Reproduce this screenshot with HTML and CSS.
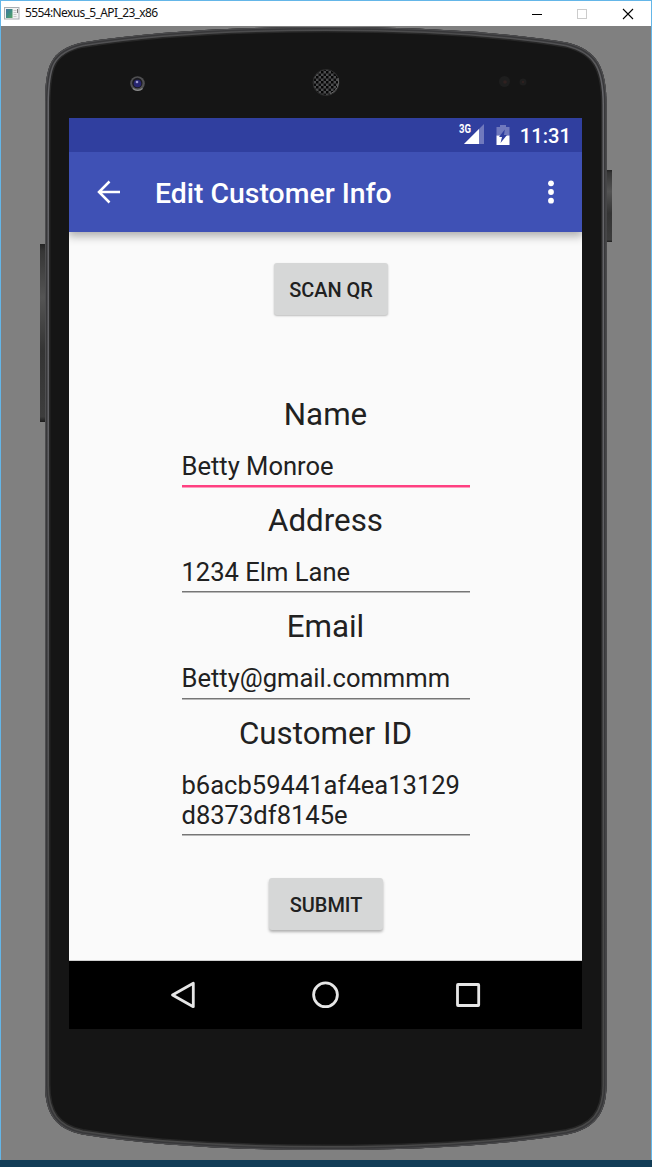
FILE: index.html
```html
<!DOCTYPE html>
<html lang="en">
<head>
<meta charset="utf-8">
<title>5554:Nexus_5_API_23_x86</title>
<link rel="stylesheet" href="styles.css">
</head>
<body>
<div class="window">
  <header class="titlebar">
    <svg class="app-icon" width="16" height="13" viewBox="0 0 16 13">
      <defs><linearGradient id="pic" x1="0" y1="0" x2="1" y2="1"><stop offset="0" stop-color="#4674a4"/><stop offset=".5" stop-color="#3f8e83"/><stop offset="1" stop-color="#5ba465"/></linearGradient></defs>
      <rect x=".5" y=".5" width="14.5" height="11.5" fill="#f3f3f3" stroke="#a9adb1"/>
      <rect x="2" y="2" width="6.5" height="9" fill="url(#pic)"/>
      <path d="M9.5 3.5h3M9.5 5.5h3M9.5 7.5h3M9.5 9.5h3" stroke="#c9c9c9"/>
      <path d="M13.5 2v4" stroke="#777"/>
    </svg>
    <span class="window-title">5554:Nexus_5_API_23_x86</span>
    <svg class="window-controls" width="110" height="24" viewBox="0 0 110 24" fill="none" shape-rendering="crispEdges">
      <path d="M0 12.5h10" stroke="#000"/>
      <rect x="45.5" y="7.5" width="9" height="9" stroke="#ccc"/>
      <path d="M91 7l10 10M101 7L91 17" stroke="#000" stroke-width="1.1" shape-rendering="auto"/>
    </svg>
  </header>
  <main class="stage">
    <svg class="device" width="650" height="1134" viewBox="1 26 650 1134">
      <defs>
        <linearGradient id="rim" x1="0" y1="0" x2="0" y2="1"><stop offset="0" stop-color="#4a4a4b"/><stop offset=".06" stop-color="#67676b"/><stop offset=".45" stop-color="#606064"/><stop offset=".8" stop-color="#4a4a4a"/><stop offset="1" stop-color="#484848"/></linearGradient>
        <linearGradient id="key" x1="0" y1="0" x2="0" y2="1"><stop offset="0" stop-color="#242424"/><stop offset=".04" stop-color="#363636"/><stop offset=".3" stop-color="#545454"/><stop offset=".6" stop-color="#343434"/><stop offset=".97" stop-color="#3d3d3d"/><stop offset="1" stop-color="#1c1c1c"/></linearGradient>
        <pattern id="mesh" x="1" y="1" width="5" height="5" patternUnits="userSpaceOnUse"><rect width="5" height="5" fill="#4c4d4e"/><rect x="0" y="0" width="2.5" height="2.5" fill="#050505"/><rect x="2.5" y="2.5" width="2.5" height="2.5" fill="#0b0b0b"/></pattern>
        <path id="body" d="M45 105C45 66 50 50 82 42.500C155 31 240 27 326 27C412 27 497 31 567 42.500C597 50 606.500 67 606.500 105V1085C606.500 1114 594 1129 567 1134.500C497 1146 412 1150 326 1150C240 1150 155 1146 82 1134.500C56 1129 45 1114 45 1085Z"/>
        <clipPath id="bodyClip"><use href="#body"/></clipPath>
      </defs>
      <rect x="40" y="244" width="6" height="178" fill="url(#key)"/>
      <rect x="606" y="170" width="6" height="72" fill="url(#key)"/>
      <g clip-path="url(#bodyClip)" fill="none">
        <use href="#body" fill="#151515"/>
        <use href="#body" stroke="#272727" stroke-width="11"/>
        <use href="#body" stroke="url(#rim)" stroke-width="8"/>
        <use href="#body" stroke="#38383a" stroke-width="5"/>
        <use href="#body" stroke="#4d4d4f" stroke-width="2"/>
      </g>
      <circle cx="137.500" cy="83.500" r="7.300" fill="#505052"/>
      <path d="M133 88.500a6.700 6.700 0 0 0 9.500 0" stroke="#8b8b8b" fill="none" stroke-width="1.200"/>
      <circle cx="137.300" cy="83" r="5.200" fill="#1b1b20"/>
      <circle cx="137.500" cy="83.500" r="3.800" fill="#282670"/>
      <circle cx="137" cy="82" r="1.300" fill="#9b9bd0"/>
      <circle cx="326" cy="82.500" r="13" fill="url(#mesh)" stroke="#2b2b2b"/>
      <path d="M338 78a13 13 0 0 1-8 16" fill="none" stroke="#666"/>
      <circle cx="504.500" cy="81.500" r="5.500" fill="#1e1e1e"/><circle cx="505" cy="82" r="1.800" fill="#302120"/>
      <circle cx="523" cy="82" r="3.500" fill="#1e1e1e"/><circle cx="523" cy="82" r="1.200" fill="#302120"/>
    </svg>
    <div class="screen">
      <div class="statusbar">
        <svg width="30" height="24" viewBox="0 0 30 24" class="signal">
          <path d="M26 4V24H6Z" fill="#7079bd"/><path d="M21 9V24H6Z" fill="#fff"/>
          <text x="1" y="13" class="network" textLength="12" lengthAdjust="spacingAndGlyphs">3G</text>
        </svg>
        <svg width="14" height="22" viewBox="0 0 14 22" class="battery">
          <path d="M4 1h6v2h3.500v8.500H.5V3H4Z" fill="#7079bd"/><path d="M.5 11.500h13V21H.5Z" fill="#fff"/>
          <path d="M8.800 5.500L3 13h3l-1.500 6L11 11H8Z" fill="#303f9f"/>
        </svg>
        <span class="clock">11:31</span>
      </div>
      <div class="toolbar">
        <svg width="24" height="24" viewBox="0 0 24 24" class="back"><path d="M12.500 1.500L2 12l10.500 10.500M2 12H23" fill="none" stroke="#fff" stroke-width="2.500"/></svg>
        <h1 class="title">Edit Customer Info</h1>
        <svg width="6" height="24" viewBox="0 0 6 24" class="more" fill="#fff"><circle cx="3" cy="3.300" r="2.900"/><circle cx="3" cy="12" r="2.900"/><circle cx="3" cy="20.700" r="2.900"/></svg>
      </div>
      <div class="content">
        <div class="button scan">SCAN QR</div>
        <div class="form">
          <div class="field"><div class="label">Name</div><div class="input focused">Betty Monroe</div></div>
          <div class="field"><div class="label">Address</div><div class="input">1234 Elm Lane</div></div>
          <div class="field"><div class="label">Email</div><div class="input">Betty@gmail.commmm</div></div>
          <div class="field"><div class="label">Customer ID</div><div class="input">b6acb59441af4ea13129<br>d8373df8145e</div></div>
        </div>
        <div class="button submit">SUBMIT</div>
      </div>
      <div class="navbar">
        <svg width="28" height="28" viewBox="0 0 28 28"><path d="M24.300 2.200V25.700L3.500 14Z"/></svg>
        <svg width="28" height="28" viewBox="0 0 28 28"><circle cx="13.500" cy="13.800" r="11.900"/></svg>
        <svg width="28" height="28" viewBox="0 0 28 28"><rect x="3.500" y="3.500" width="21.200" height="21" rx=".5"/></svg>
      </div>
    </div>
  </main>
  <div class="desktop-edge"></div>
</div>
</body>
</html>
```
FILE: styles.css
```css
* { box-sizing: border-box; }
body { margin: 0; font-family: Roboto, sans-serif; }
svg { display: block; flex: none; }
.window { width: 652px; height: 1167px; display: flex; flex-direction: column; overflow: hidden; }
.titlebar { height: 26px; flex: none; background: #fff; border: 1px solid #64b6e8; border-bottom: 0; display: flex; align-items: center; padding-left: 3px; }
.window-title { font: 12px/23px "Noto Sans", "Open Sans", sans-serif; margin: -2px 0 0 5px; letter-spacing: -.62px; color: #111; white-space: nowrap; }
.window-controls { margin-left: auto; margin-right: 9px; }
.stage { height: 1134px; flex: none; position: relative; background: #808080; border: solid #64b6e8; border-width: 0 1px; padding: 92px 0 0 68px; }
.device { position: absolute; left: 0; top: 0; }
.desktop-edge { height: 7px; background: #123d57; }
.screen { position: relative; width: 513px; height: 911px; background: #fafafa; display: flex; flex-direction: column; overflow: hidden; }
.statusbar { position: relative; z-index: 1; height: 34px; flex: none; background: #303f9f; display: flex; justify-content: flex-end; align-items: center; padding-right: 11px; color: #fff; }
.network { font: 700 12.5px Roboto, sans-serif; fill: #fff; }
.signal { margin-top: -7px; }
.battery { margin-left: 8px; }
.clock { font-weight: 500; font-size: 20.2px; margin-left: 10px; line-height: 34px; padding-top: 2px; }
.toolbar { height: 80px; flex: none; background: #3f51b5; display: flex; align-items: center; padding: 0 28px; color: #fff; box-shadow: 0 3px 9px 1px rgba(0,0,0,.32); }
.title { margin: 3px 0 0 34px; font-size: 28.4px; font-weight: 500; line-height: 34px; white-space: nowrap; }
.more { margin-left: auto; }
.content { height: 729px; flex: none; display: flex; flex-direction: column; align-items: center; border-bottom: 1px solid #cfcfcf; }
.button { width: 114px; height: 52px; flex: none; border-radius: 3px; background: #d6d7d7; color: #212121; font-size: 19.95px; font-weight: 500; line-height: 53px; text-align: center; white-space: nowrap; padding: 1px 0 0 1px; }
.scan { margin: 31px 0 0 10px; box-shadow: 0 1px 2px rgba(0,0,0,.25); }
.submit { margin-top: 15px; box-shadow: 0 2px 3px rgba(0,0,0,.3); }
.form { margin-top: 81px; width: 288px; color: #212121; height: 467px; }
.field { min-height: 106.2px; }
.label { font-size: 31.3px; line-height: 37px; text-align: center; white-space: nowrap; }
.input { margin-top: 18px; font-size: 25.55px; line-height: 30px; padding-bottom: 11.2px; white-space: nowrap; background: linear-gradient(#767676, #767676) 0 calc(100% - 5.5px) / 100% 1.5px no-repeat; }
.focused { background: linear-gradient(#ff4081, #ff4081) 0 calc(100% - 5px) / 100% 2.5px no-repeat; }
.navbar { height: 68px; flex: none; background: #000; display: flex; justify-content: space-between; align-items: center; padding: 0 100px; fill: none; stroke: #e6e6e6; stroke-width: 2.8; stroke-linejoin: round; }
```
